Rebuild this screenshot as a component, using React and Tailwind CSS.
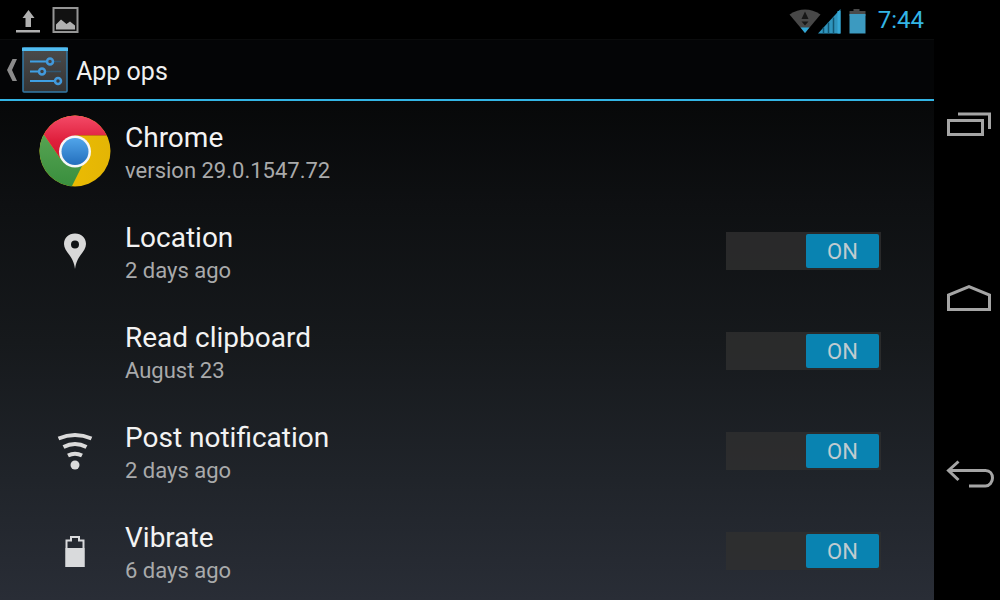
import { useState } from "react";

function StatusBar() {
  return (
    <div className="flex h-[39px] shrink-0 items-center justify-between bg-black pr-2.5 pl-4">
      <div className="flex items-center gap-3">
        <svg className="h-7 w-6" viewBox="0 0 24 28" fill="#b0b0b0" aria-hidden="true">
          <path d="M12.500 4 18.500 12H15v9H9.500v-9H6.500Z" />
          <rect x="0" y="24" width="25" height="2.500" />
        </svg>
        <svg className="h-7 w-7" viewBox="0 0 28 28" aria-hidden="true">
          <rect x="1.500" y="2" width="24" height="24" fill="#111" stroke="#959595" strokeWidth="2" />
          <path d="M4 23.500v-5l5-5 5.500 4.500 3.500-2.500 5 4v4Z" fill="#b0b0b0" />
        </svg>
      </div>
      <div className="flex items-center">
        <svg className="h-7 w-20" viewBox="0 0 80 28" aria-hidden="true">
          <path d="M3.500 8.500Q19-1.500 34.500 8.500L19 27Z" fill="#484848" />
          <path d="m19 5.500 3.500 7.500h-7ZM15.500 15.500h7L19 19.500Z" fill="#171717" />
          <path d="M14.500 21.500h9L19 27Z" fill="#2fa8d8" />
          <path d="M32 27.500 54.500 3V27.500Z" fill="#2f94bd" />
          <path d="M37.500 21.500v6M42.500 16.500v11M47.500 11.500v16" stroke="#125672" strokeWidth="1.500" />
          <path d="M53 5v22.500" stroke="#36a9d6" strokeWidth="3" />
          <path d="M67.500 3h6v2h6v5h-16V5h4Z" fill="#4a4a4a" />
          <rect x="63.500" y="8" width="16" height="19.500" fill="#3c9ac0" />
        </svg>
        <time className="ml-3 text-2xl leading-7 text-[#33b5e5]">7:44</time>
      </div>
    </div>
  );
}

function AppBar() {
  return (
    <header className="flex h-[62px] shrink-0 items-center border-t border-b-2 border-t-[#0b0c0d] border-b-[#33b5e5] bg-[#040506] pl-1.5">
      <button type="button" aria-label="Navigate up" className="flex items-center gap-1">
        <svg className="h-6 w-3" viewBox="0 0 12 24" fill="#8b8b8b" aria-hidden="true">
          <path d="M6.500 1H11L6 12l5 11H6.500L1 12Z" />
        </svg>
        <svg className="h-[46px] w-[46px]" viewBox="0 0 46 46" fill="none" aria-hidden="true">
          <defs>
            <linearGradient id="tile" x2="0" y2="1">
              <stop stopColor="#4b4b4b" />
              <stop offset="1" stopColor="#343434" />
            </linearGradient>
          </defs>
          <rect x="1" y="1" width="44" height="44" rx="1" fill="url(#tile)" stroke="#3379a6" strokeWidth="1.500" />
          <path d="M0 0.500h46V4H0Z" fill="#51bdf1" />
          <path d="M8 14.500h17M8 24.500h9M8 34h25" stroke="#3fa0e4" strokeWidth="2" />
          <path d="M31 14.500h8M24 24.500h15" stroke="#315772" strokeWidth="1.500" />
          <g stroke="#4299db" strokeWidth="2.500">
            <circle cx="28" cy="14.500" r="3" />
            <circle cx="20" cy="24.500" r="3" />
            <circle cx="36" cy="34" r="3" />
          </g>
        </svg>
      </button>
      <h1 className="ml-2 pt-1 text-[25px] leading-8 text-[#f0f0f0]">App ops</h1>
    </header>
  );
}

function ChromeLogo() {
  return (
    <svg className="h-[72px] w-[72px]" viewBox="0 0 72 72" aria-hidden="true">
      <defs>
        <linearGradient id="red" x2="0" y2="1">
          <stop stopColor="#f44b68" />
          <stop offset="0.600" stopColor="#df1f3c" />
          <stop offset="1" stopColor="#d01830" />
        </linearGradient>
        <linearGradient id="green" x2="0" y2="1">
          <stop stopColor="#62ab5a" />
          <stop offset="1" stopColor="#388e3d" />
        </linearGradient>
        <linearGradient id="yellow" x2="1" y2="0">
          <stop stopColor="#f2c000" />
          <stop offset="1" stopColor="#e3b505" />
        </linearGradient>
        <linearGradient id="blue" x2="0" y2="1">
          <stop stopColor="#51a5ea" />
          <stop offset="1" stopColor="#246fbd" />
        </linearGradient>
        <clipPath id="disc">
          <circle cx="36" cy="36" r="35.500" />
        </clipPath>
      </defs>
      <g clipPath="url(#disc)">
        <rect width="72" height="72" fill="url(#yellow)" />
        <path d="M-10 0 5.500 20.500 21 43l23 6-12 24H-10Z" fill="url(#green)" />
        <path d="M-10 0H72v20.500H36L21 43 5.500 20.500Z" fill="url(#red)" />
        <path d="M36 20.500h32" stroke="#b47a08" strokeWidth="1" opacity="0.600" />
      </g>
      <circle cx="36" cy="36.500" r="16" fill="#f7f7f7" />
      <circle cx="36" cy="36.500" r="13.500" fill="url(#blue)" />
    </svg>
  );
}

function PinIcon() {
  return (
    <svg className="h-10 w-10" viewBox="0 0 40 40" aria-hidden="true">
      <path
        d="M20 2.500C13.500 2.500 9 7 9 13c0 4 2.500 7 5 10.500 3 4 5 7.500 6 14.500 1-7 3-10.500 6-14.500 2.500-3.500 5-6.500 5-10.500C31 7 26.500 2.500 20 2.500Zm0 7a4 4 0 1 1 0 8 4 4 0 0 1 0-8Z"
        fill="#d8d8d8"
      />
    </svg>
  );
}

function WifiIcon() {
  return (
    <svg className="h-10 w-10" viewBox="0 0 40 40" fill="none" stroke="#dadada" strokeWidth="4" aria-hidden="true">
      <path d="M3.500 7.500Q20 0.500 36.500 7.500" />
      <path d="M8.500 16Q20 10 31.500 16" />
      <path d="M13 24.500Q20 21 27 24.500" />
      <circle cx="20" cy="34" r="4.500" fill="#dadada" stroke="none" />
    </svg>
  );
}

function BatteryIcon() {
  return (
    <svg className="h-10 w-10" viewBox="0 0 40 40" aria-hidden="true">
      <path d="M11.500 35V9.500H16V6h8v3.500h4.500V35Z" fill="none" stroke="#d9dadc" strokeWidth="2" />
      <path d="M10.500 17h19v19h-19Z" fill="#d9dadc" />
    </svg>
  );
}

function Row({ icon, title, detail, children }) {
  return (
    <li className="flex h-[100px] shrink-0 items-center pr-[53px]">
      <div className="flex w-[125px] shrink-0 justify-center pl-6">{icon}</div>
      <div className="min-w-0 flex-1 pt-0.5">
        <div className="text-[28px] leading-[38px] text-[#f3f3f3]">{title}</div>
        <div className="text-[22px] leading-7 text-[#a9aaab]">{detail}</div>
      </div>
      {children}
    </li>
  );
}

function Toggle({ id }) {
  const [on, setOn] = useState(true);
  return (
    <label htmlFor={id} className="relative flex h-[38px] w-[155px] shrink-0 cursor-pointer bg-[#303030]/80 p-0.5">
      <input
        id={id}
        type="checkbox"
        role="switch"
        checked={on}
        onChange={() => setOn(!on)}
        className="sr-only"
      />
      <span
        className={
          on
            ? "ml-auto flex h-full w-[73px] items-center justify-center rounded-xs bg-[#0983b1] pt-0.5 text-[22px] leading-7 text-[#c0cbd0]"
            : "flex h-full w-[73px] items-center justify-center rounded-xs bg-[#555] pt-0.5 text-[22px] leading-7 text-[#c0cbd0]"
        }
      >
        {on ? "ON" : "OFF"}
      </span>
    </label>
  );
}

const operations = [
  { id: "location", title: "Location", detail: "2 days ago", icon: <PinIcon /> },
  { id: "clipboard", title: "Read clipboard", detail: "August 23", icon: null },
  { id: "notification", title: "Post notification", detail: "2 days ago", icon: <WifiIcon /> },
  { id: "vibrate", title: "Vibrate", detail: "6 days ago", icon: <BatteryIcon /> },
];

function NavigationBar() {
  return (
    <nav className="flex w-[66px] shrink-0 flex-col bg-black py-[37px]">
      <button type="button" aria-label="Recent apps" className="flex flex-1 items-center justify-center pl-1">
        <svg className="h-9 w-[50px]" viewBox="0 0 50 36" fill="none" stroke="#a5a5a5" strokeWidth="3" aria-hidden="true">
          <rect x="4.500" y="13.500" width="34" height="14" />
          <path d="M14 7h31.500v15" />
        </svg>
      </button>
      <button type="button" aria-label="Home" className="flex flex-1 items-center justify-center pl-1">
        <svg className="h-9 w-[50px]" viewBox="0 0 50 36" fill="none" stroke="#a5a5a5" strokeWidth="3" aria-hidden="true">
          <path d="M4.500 27.500V13L25 4.500 45.500 13V27.500Z" />
        </svg>
      </button>
      <button type="button" aria-label="Back" className="flex flex-1 items-center justify-center pl-1">
        <svg className="h-9 w-[50px]" viewBox="0 0 50 36" fill="none" stroke="#a5a5a5" strokeWidth="3" aria-hidden="true">
          <path d="M14.500 4.500 4.500 13.500l10 9.500" />
          <path d="M5 13.500h36.500c4.500 0 7 3.500 7 7.500s-3 8-7 8H25" />
        </svg>
      </button>
    </nav>
  );
}

export default function App() {
  return (
    <div className="flex h-screen bg-black font-[Roboto,sans-serif]">
      <div className="flex min-w-0 flex-1 flex-col bg-[linear-gradient(to_bottom,#000000,#0e1012_34%,#16191c_57%,#20242a_80%,#292d36)]">
        <StatusBar />
        <AppBar />
        <main className="min-h-0 flex-1 overflow-y-auto [scrollbar-width:none]">
          <ul>
            <Row icon={<ChromeLogo />} title="Chrome" detail="version 29.0.1547.72" />
            {operations.map((op) => (
              <Row
                key={op.id}
                icon={op.icon}
                title={<label htmlFor={op.id}>{op.title}</label>}
                detail={op.detail}
              >
                <Toggle id={op.id} />
              </Row>
            ))}
          </ul>
        </main>
      </div>
      <NavigationBar />
    </div>
  );
}
